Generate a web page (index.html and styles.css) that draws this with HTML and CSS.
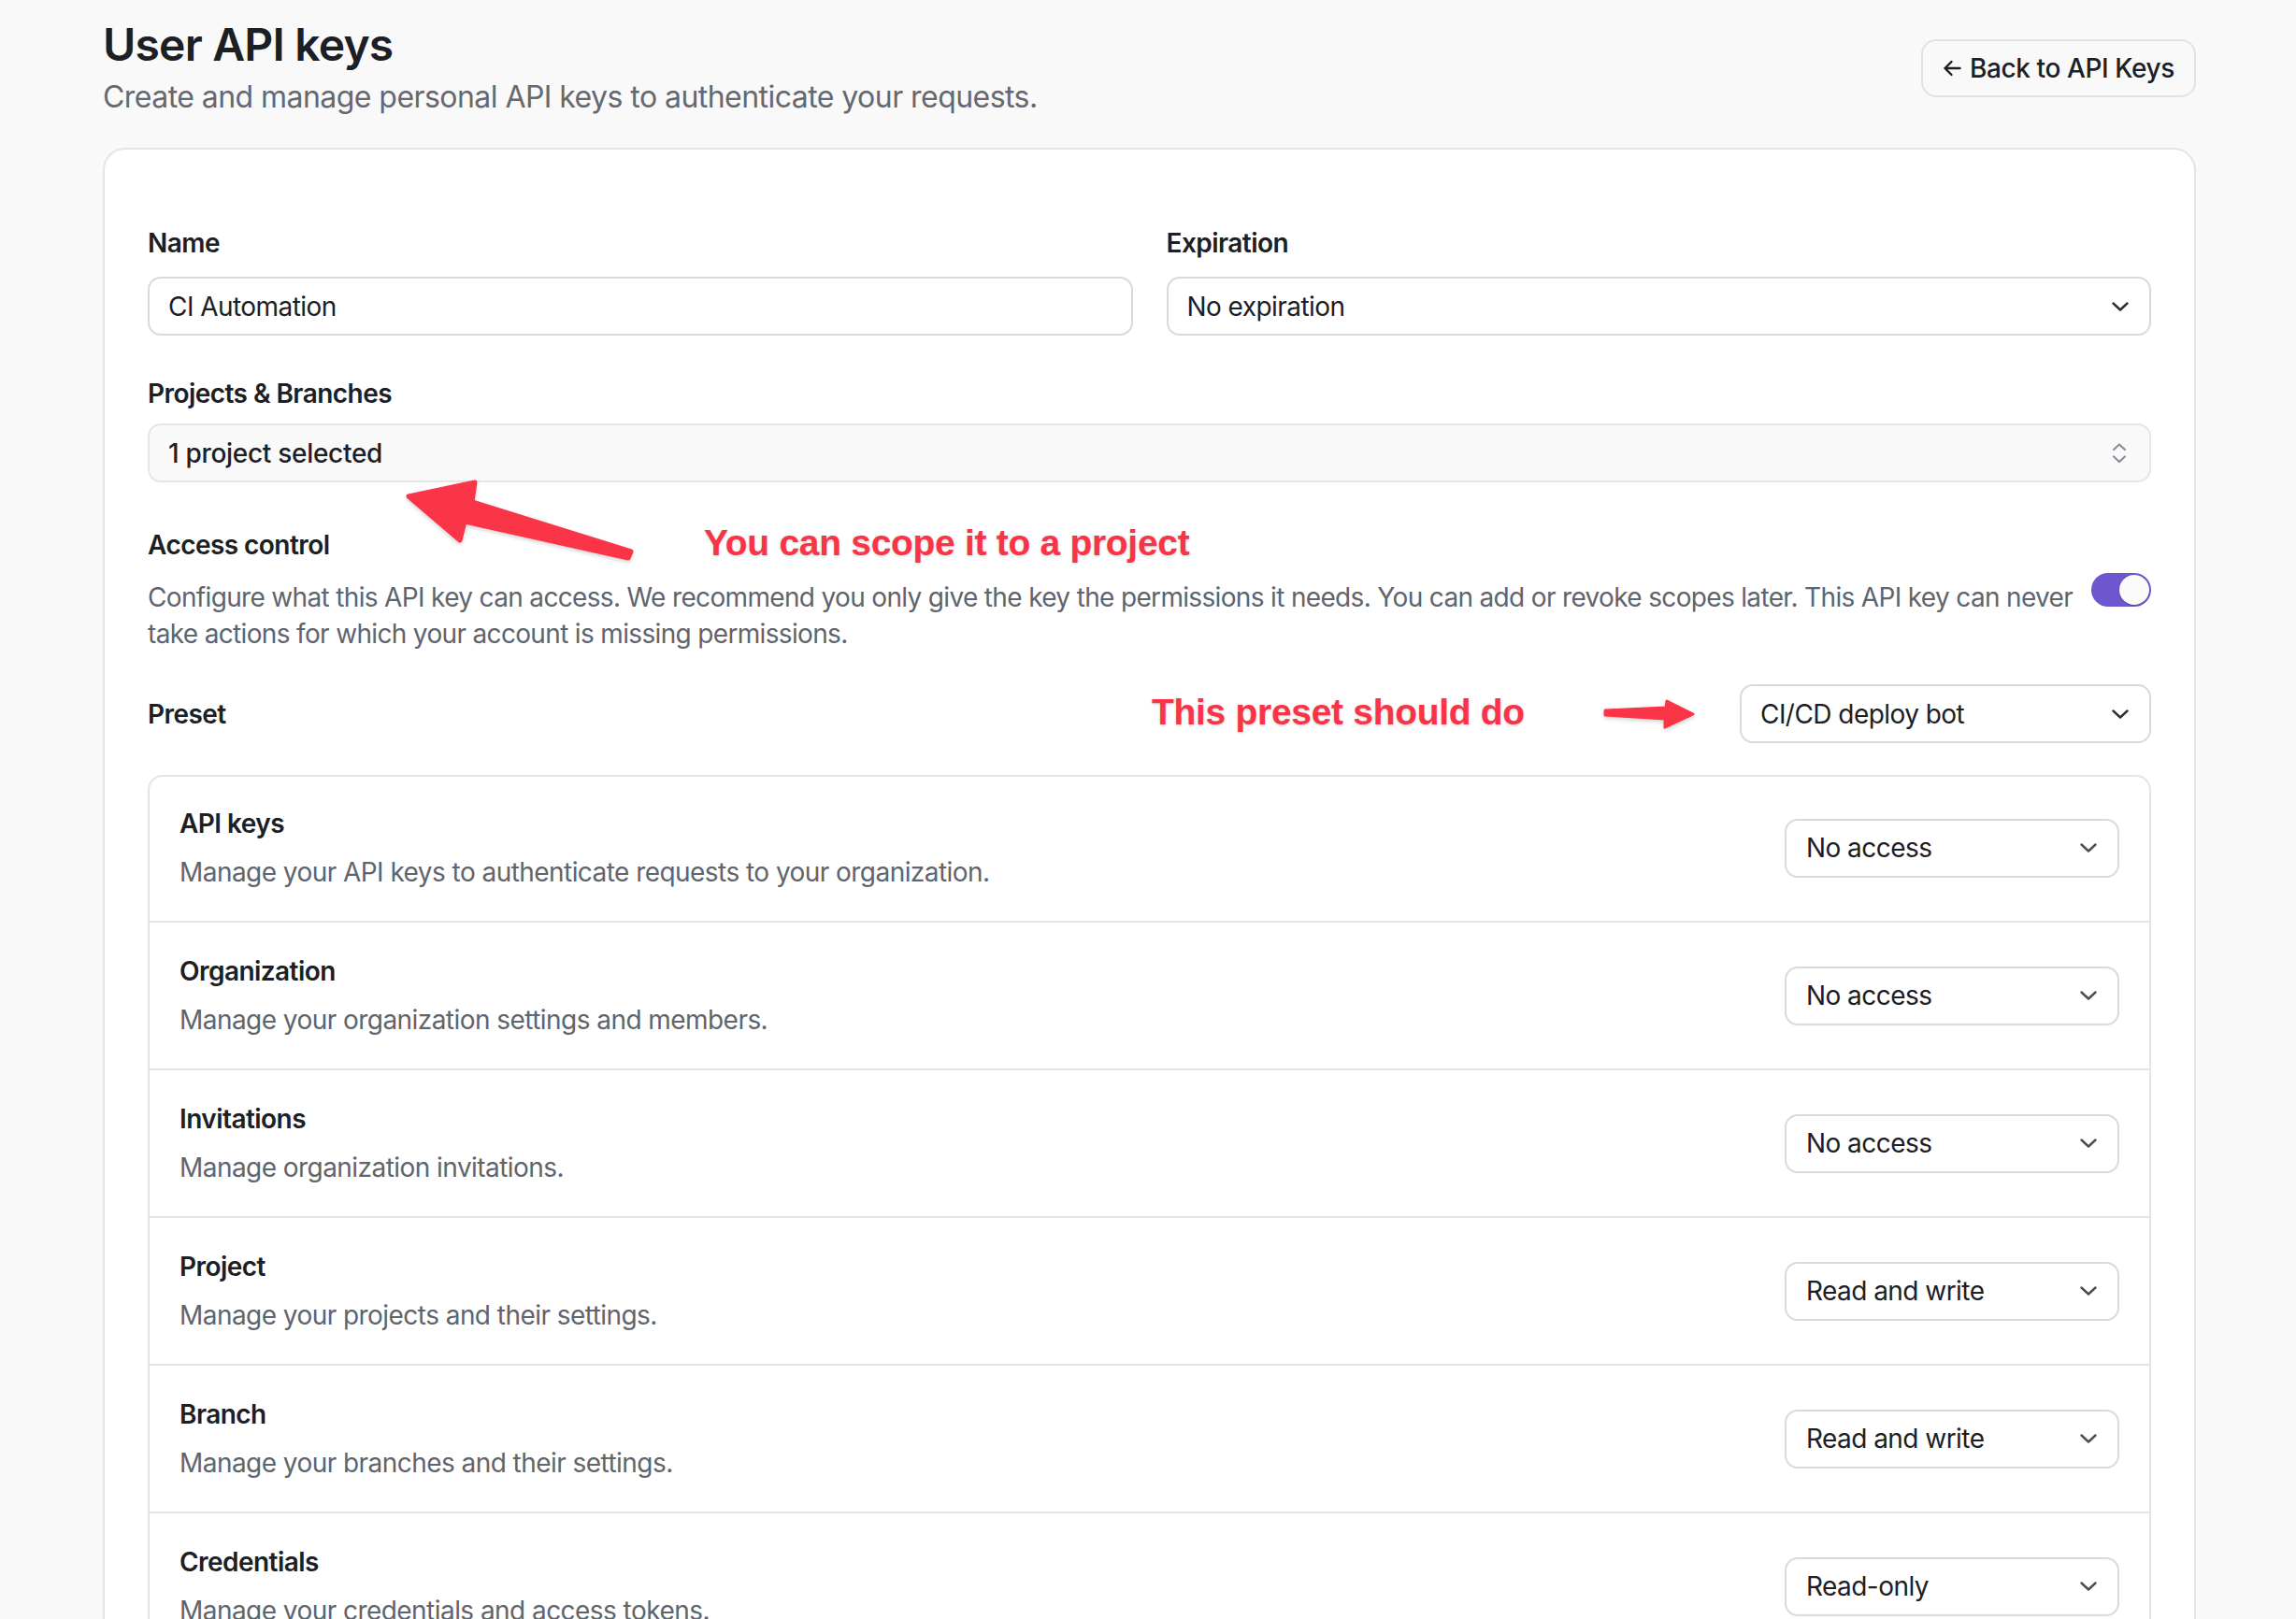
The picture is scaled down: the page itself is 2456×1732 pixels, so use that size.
FILE: index.html
```html
<!DOCTYPE html>
<html lang="en">
<head>
<meta charset="utf-8">
<title>User API keys</title>
<link rel="stylesheet" href="styles.css">
</head>
<body>
<div class="page">
  <header class="header">
    <div class="header-text">
      <h1 class="title">User API keys</h1>
      <p class="subtitle">Create and manage personal API keys to authenticate your requests.</p>
    </div>
    <button class="back-btn" type="button">
      <svg class="back-icon" width="20" height="18" viewBox="0 0 20 18" aria-hidden="true"><path d="M18.5 9H2.5M9.5 2L2.5 9L9.5 16" fill="none" stroke="currentColor" stroke-width="2.4" stroke-linecap="round" stroke-linejoin="round"/></svg>
      <span>Back to API Keys</span>
    </button>
  </header>

  <section class="card">
    <div class="grid2">
      <div class="field">
        <label class="label">Name</label>
        <div class="control">CI Automation</div>
      </div>
      <div class="field">
        <label class="label">Expiration</label>
        <div class="control select">
          <span>No expiration</span>
          <svg class="chev" width="18" height="10" viewBox="0 0 18 10" aria-hidden="true"><polyline points="1.5,1.5 9,8.5 16.5,1.5" fill="none" stroke="currentColor" stroke-width="2.4" stroke-linecap="round" stroke-linejoin="round"/></svg>
        </div>
      </div>
    </div>

    <div class="field field-projects">
      <label class="label label-tight">Projects &amp; Branches</label>
      <div class="control control-soft select">
        <span class="strong">1 project selected</span>
        <svg class="sort" width="18" height="24" viewBox="0 0 18 24" aria-hidden="true"><polyline points="3,8 9,2.5 15,8" fill="none" stroke="currentColor" stroke-width="2.2" stroke-linecap="round" stroke-linejoin="round"/><polyline points="3,15.5 9,21 15,15.5" fill="none" stroke="currentColor" stroke-width="2.2" stroke-linecap="round" stroke-linejoin="round"/></svg>
      </div>
    </div>

    <div class="access">
      <div class="access-text">
        <div class="label label-flat">Access control</div>
        <p class="access-desc">Configure what this API key can access. We recommend you only give the key the permissions it needs. You can add or revoke scopes later. This API key can never take actions for which your account is missing permissions.</p>
      </div>
      <div class="switch" role="switch" aria-checked="true"><span class="knob"></span></div>
    </div>

    <div class="preset">
      <div class="label label-flat">Preset</div>
      <div class="control select select-preset">
        <span>CI/CD deploy bot</span>
        <svg class="chev" width="18" height="10" viewBox="0 0 18 10" aria-hidden="true"><polyline points="1.5,1.5 9,8.5 16.5,1.5" fill="none" stroke="currentColor" stroke-width="2.4" stroke-linecap="round" stroke-linejoin="round"/></svg>
      </div>
    </div>

    <div class="perms">
      <div class="perm-row">
        <div class="perm-text"><div class="perm-title">API keys</div><div class="perm-desc">Manage your API keys to authenticate requests to your organization.</div></div>
        <div class="control select select-perm"><span>No access</span><svg class="chev chev-muted" width="18" height="10" viewBox="0 0 18 10" aria-hidden="true"><polyline points="1.5,1.5 9,8.5 16.5,1.5" fill="none" stroke="currentColor" stroke-width="2.4" stroke-linecap="round" stroke-linejoin="round"/></svg></div>
      </div>
      <div class="perm-row">
        <div class="perm-text"><div class="perm-title">Organization</div><div class="perm-desc">Manage your organization settings and members.</div></div>
        <div class="control select select-perm"><span>No access</span><svg class="chev chev-muted" width="18" height="10" viewBox="0 0 18 10" aria-hidden="true"><polyline points="1.5,1.5 9,8.5 16.5,1.5" fill="none" stroke="currentColor" stroke-width="2.4" stroke-linecap="round" stroke-linejoin="round"/></svg></div>
      </div>
      <div class="perm-row">
        <div class="perm-text"><div class="perm-title">Invitations</div><div class="perm-desc">Manage organization invitations.</div></div>
        <div class="control select select-perm"><span>No access</span><svg class="chev chev-muted" width="18" height="10" viewBox="0 0 18 10" aria-hidden="true"><polyline points="1.5,1.5 9,8.5 16.5,1.5" fill="none" stroke="currentColor" stroke-width="2.4" stroke-linecap="round" stroke-linejoin="round"/></svg></div>
      </div>
      <div class="perm-row">
        <div class="perm-text"><div class="perm-title">Project</div><div class="perm-desc">Manage your projects and their settings.</div></div>
        <div class="control select select-perm"><span>Read and write</span><svg class="chev chev-muted" width="18" height="10" viewBox="0 0 18 10" aria-hidden="true"><polyline points="1.5,1.5 9,8.5 16.5,1.5" fill="none" stroke="currentColor" stroke-width="2.4" stroke-linecap="round" stroke-linejoin="round"/></svg></div>
      </div>
      <div class="perm-row">
        <div class="perm-text"><div class="perm-title">Branch</div><div class="perm-desc">Manage your branches and their settings.</div></div>
        <div class="control select select-perm"><span>Read and write</span><svg class="chev chev-muted" width="18" height="10" viewBox="0 0 18 10" aria-hidden="true"><polyline points="1.5,1.5 9,8.5 16.5,1.5" fill="none" stroke="currentColor" stroke-width="2.4" stroke-linecap="round" stroke-linejoin="round"/></svg></div>
      </div>
      <div class="perm-row">
        <div class="perm-text"><div class="perm-title">Credentials</div><div class="perm-desc">Manage your credentials and access tokens.</div></div>
        <div class="control select select-perm"><span>Read-only</span><svg class="chev chev-muted" width="18" height="10" viewBox="0 0 18 10" aria-hidden="true"><polyline points="1.5,1.5 9,8.5 16.5,1.5" fill="none" stroke="currentColor" stroke-width="2.4" stroke-linecap="round" stroke-linejoin="round"/></svg></div>
      </div>
    </div>
  </section>

  <div class="annotations" aria-hidden="true">
    <svg class="arrows" width="2456" height="1732" viewBox="0 0 2456 1732">
      <defs>
        <filter id="ashadow" x="-10%" y="-10%" width="120%" height="130%">
          <feDropShadow dx="0" dy="2" stdDeviation="2" flood-color="#000" flood-opacity="0.18"/>
        </filter>
      </defs>
      <polygon filter="url(#ashadow)" points="675,590 505,537 508,516 437,531 492,578 497,558 672,597" fill="#f93446" stroke="#f93446" stroke-width="5" stroke-linejoin="round"/>
      <polygon filter="url(#ashadow)" points="1717,760 1782,757 1783,750 1811,764 1781,778 1781,769 1717,765" fill="#f93446" stroke="#f93446" stroke-width="3" stroke-linejoin="round"/>
    </svg>
    <div class="note note-scope">You can scope it to a project</div>
    <div class="note note-preset">This preset should do</div>
  </div>
</div>
</body>
</html>
```

FILE: styles.css
```css
html, body {
  margin: 0;
  padding: 0;
}

body {
  background: #f9f9f9;
  color: #1c2024;
  font-family: Inter, "Noto Sans", "Liberation Sans", sans-serif;
  font-size: 28px;
  line-height: 40px;
  letter-spacing: -0.55px;
  overflow: hidden;
  height: 1732px;
}

.page {
  position: relative;
  padding: 22px 107px 60px 110px;
}

/* Header */
.header {
  display: flex;
  justify-content: space-between;
  align-items: center;
  margin-bottom: 34px;
}

.title {
  margin: 0;
  font-size: 48px;
  line-height: 52px;
  font-weight: 600;
  letter-spacing: -0.8px;
  color: #1c2024;
}

.subtitle {
  margin: 10px 0 0;
  font-size: 32px;
  line-height: 40px;
  letter-spacing: -0.55px;
  color: #656870;
}

.back-btn {
  display: flex;
  align-items: center;
  gap: 9px;
  height: 62px;
  padding: 0 21px;
  border: 2px solid #e2e2e2;
  border-radius: 16px;
  background: #f9f9f9;
  color: #1c2024;
  font-family: inherit;
  font-size: 28px;
  font-weight: 500;
  line-height: 40px;
  letter-spacing: -0.4px;
}

.back-icon {
  display: block;
}

/* Card */
.card {
  background: #ffffff;
  border: 2px solid #e4e4e7;
  border-radius: 24px;
  padding: 80px 46px 48px;
}

.grid2 {
  display: grid;
  grid-template-columns: 1fr 1fr;
  column-gap: 36px;
}

.field {
  display: flex;
  flex-direction: column;
}

.label {
  display: block;
  font-size: 28px;
  line-height: 40px;
  font-weight: 600;
  color: #1c2024;
  margin-bottom: 16px;
}

.label-tight {
  margin-bottom: 12px;
}

.label-flat {
  margin-bottom: 0;
}

.field-projects {
  margin-top: 42px;
}

.control {
  box-sizing: border-box;
  height: 63px;
  display: flex;
  align-items: center;
  padding: 0 22px 0 20px;
  border: 2px solid #d9d9e0;
  border-radius: 14px;
  background: #ffffff;
  color: #1c2024;
  font-size: 28px;
  line-height: 40px;
}

.select {
  justify-content: space-between;
}

.control-soft {
  background: #f9f9f9;
  border-color: #e6e6e9;
}

.strong {
  font-weight: 500;
  letter-spacing: -0.3px;
}

.chev {
  display: block;
  color: #2b2d33;
  flex-shrink: 0;
}

.chev-muted {
  color: #4b4d55;
}

.sort {
  display: block;
  color: #8b8d98;
  margin-right: 1px;
}

/* Access control */
.access {
  margin-top: 47px;
  display: flex;
  align-items: center;
  gap: 4px;
}

.access-text {
  flex: 1;
  min-width: 0;
}

.access-desc {
  margin: 17px 0 0;
  font-size: 28px;
  line-height: 39px;
  letter-spacing: -0.66px;
  color: #60646c;
}

.switch {
  box-sizing: border-box;
  width: 64px;
  height: 36px;
  padding: 2px;
  border-radius: 18px;
  background: #6e56cf;
  display: flex;
  justify-content: flex-end;
  align-items: center;
  flex-shrink: 0;
  margin-top: 1px;
}

.knob {
  width: 32px;
  height: 32px;
  border-radius: 50%;
  background: #fbfbfb;
  box-shadow: 0 1px 2px rgba(0, 0, 0, 0.2);
}

/* Preset */
.preset {
  margin-top: 34px;
  display: flex;
  justify-content: space-between;
  align-items: center;
}

.select-preset {
  width: 440px;
}

/* Permissions */
.perms {
  margin-top: 34px;
  border: 2px solid #e4e4e7;
  border-radius: 16px;
}

.perm-row {
  display: flex;
  justify-content: space-between;
  align-items: center;
  padding: 32px 32px;
  border-top: 2px solid #e4e4e7;
}

.perm-row:first-child {
  border-top: 0;
  padding-top: 30px;
}

.perm-title {
  font-size: 28px;
  line-height: 40px;
  font-weight: 600;
  color: #1c2024;
}

.perm-desc {
  margin-top: 12px;
  font-size: 28px;
  line-height: 40px;
  color: #60646c;
}

.select-perm {
  width: 358px;
  padding-left: 21px;
}

/* Annotations overlay */
.annotations {
  position: absolute;
  left: 0;
  top: 0;
  width: 2456px;
  height: 1732px;
  pointer-events: none;
}

.arrows {
  position: absolute;
  left: 0;
  top: 0;
}

.note {
  position: absolute;
  font-family: "Liberation Sans", Arial, sans-serif;
  font-weight: 700;
  font-size: 39px;
  line-height: 39px;
  letter-spacing: -0.3px;
  color: #f93446;
  white-space: nowrap;
  text-shadow: 0 1px 3px rgba(0, 0, 0, 0.18);
}

.note-scope {
  left: 753px;
  top: 561px;
}

.note-preset {
  left: 1232px;
  top: 742px;
}
```
